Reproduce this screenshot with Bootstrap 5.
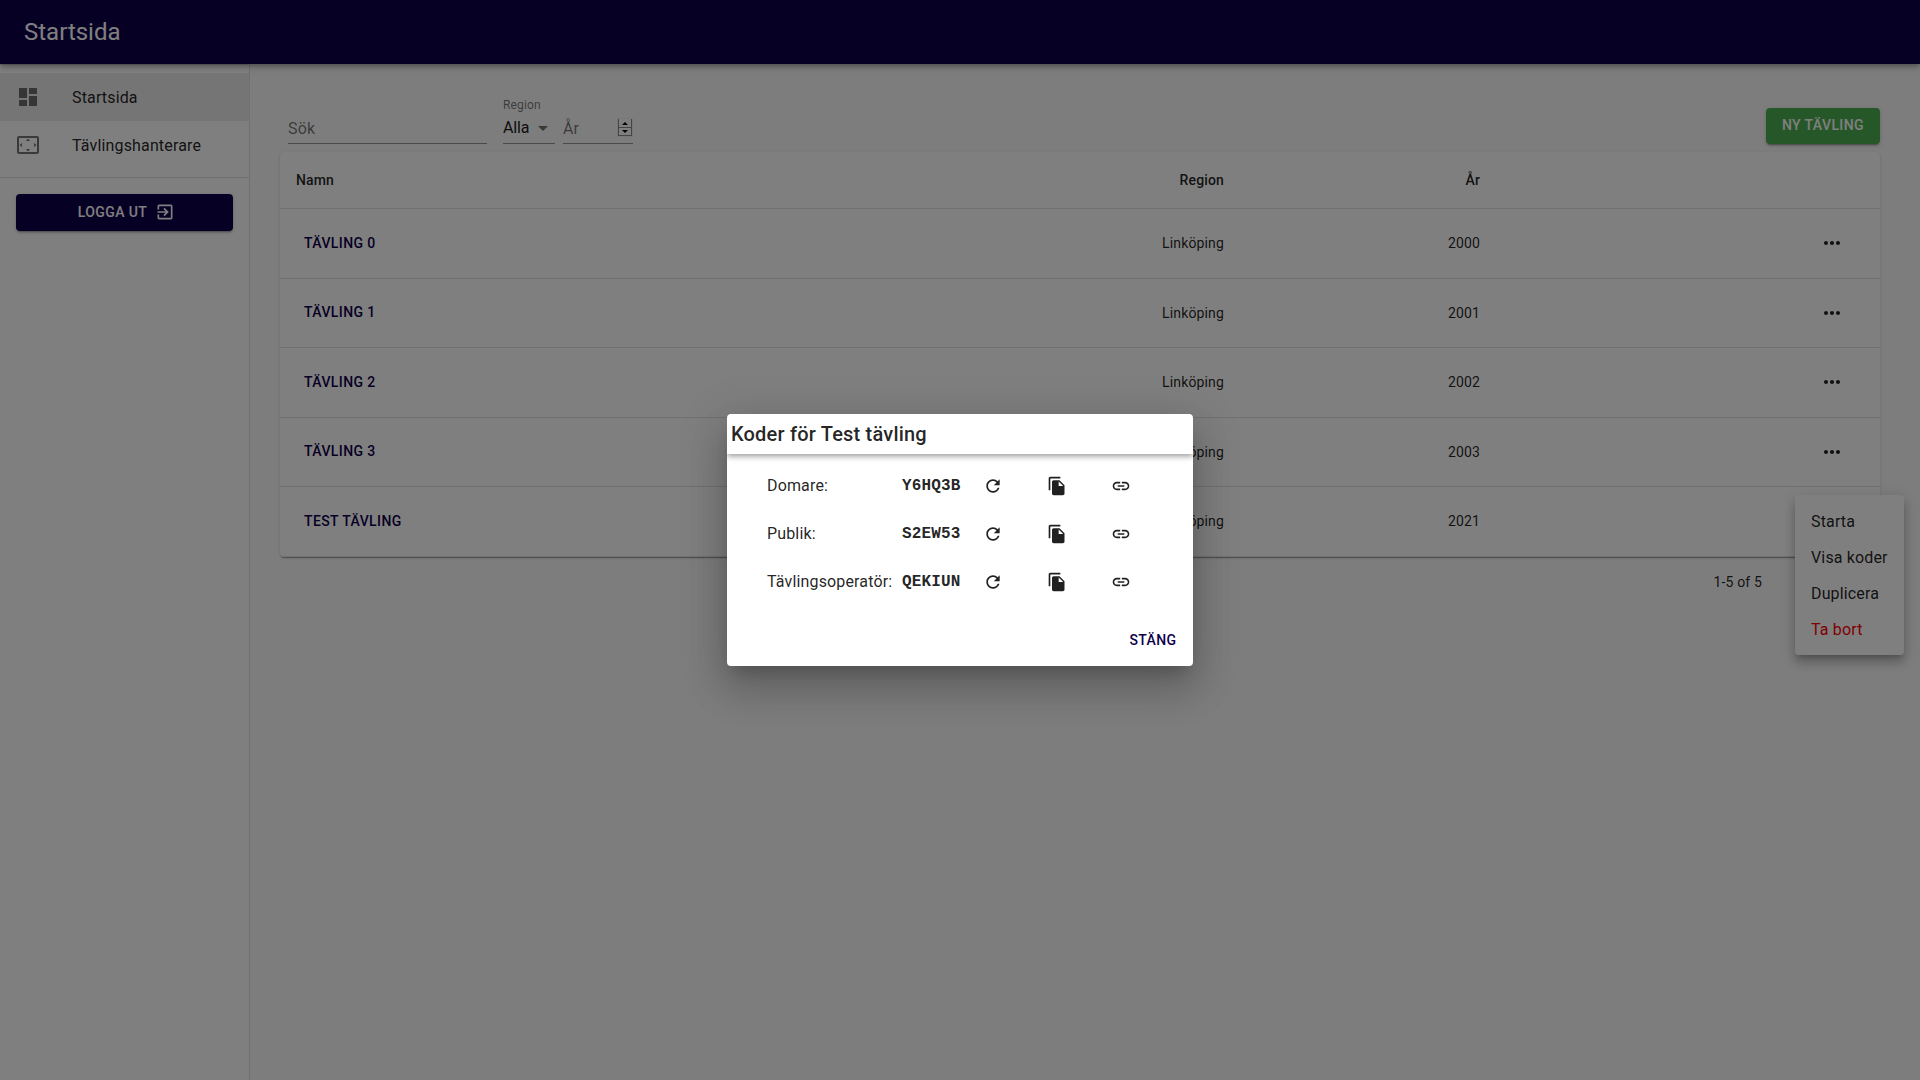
<!DOCTYPE html>
<html lang="sv">
<head>
<meta charset="utf-8">
<title>Startsida</title>
<meta name="viewport" content="width=device-width, initial-scale=1">
<link href="https://cdn.jsdelivr.net/npm/bootstrap@5.3.0/dist/css/bootstrap.min.css" rel="stylesheet">
<style>
:root{--brand:#0e004a;--ink:rgba(0,0,0,.87);--muted:rgba(0,0,0,.54);--line:rgba(0,0,0,.12)}
body{font-family:Roboto,"Liberation Sans",sans-serif;font-size:16px;line-height:1.5;letter-spacing:.00938em;color:var(--ink);background:#fafafa;height:1080px;overflow:hidden}
svg{fill:currentColor;display:block;flex:none}
.ic20{width:20px;height:20px}.ic24{width:24px;height:24px}
.topbar{height:64px;background:var(--brand);color:#fff;font-size:24px;letter-spacing:0;padding:0 24px;z-index:5;box-shadow:0 2px 4px -1px rgba(0,0,0,.2),0 4px 5px rgba(0,0,0,.14),0 1px 10px rgba(0,0,0,.12)}
.side{width:250px;background:#fff;border-right:1px solid #e0e0e0}
.side-list{padding:8px 0;border-top:1px solid #e0e0e0;border-bottom:1px solid #e0e0e0}
.side-link{height:48px;padding:0 16px;color:var(--ink);text-decoration:none;gap:32px}
.side-link svg{color:var(--muted)}
.side-link span{padding-top:1px}
.side-link.on{background:#ebebeb}
.tbtn{font-family:inherit;font-size:14px;font-weight:500;line-height:24.5px;letter-spacing:.02857em;text-transform:uppercase;padding:6px 8px;min-width:64px;border:0;border-radius:4px;color:var(--brand);background:none}
.tbtn.filled{color:#fff;background:var(--brand);padding:6px 16px;box-shadow:0 3px 1px -2px rgba(0,0,0,.2),0 2px 2px rgba(0,0,0,.14),0 1px 5px rgba(0,0,0,.12)}
.tbtn.logout{padding:6px 14px 6px 18px}
.tbtn.green{background:#4caf50;line-height:24px;padding-top:5.4px;padding-bottom:7.1px}
.work{padding:0 40px 0 30px}
.filters{height:88px;padding:0 0 8px 8px}
.field{border-bottom:1px solid #949494;height:32px;padding:7px 0 6px;line-height:19px;color:var(--ink);letter-spacing:.00938em}
.field.sel{padding-top:6px;letter-spacing:-.01em;color:#1c1c1c}
.ph{color:rgba(0,0,0,.54)}
.f-label{font-size:12px;line-height:12px;color:var(--muted);margin-bottom:1px}
.paper{background:#fff;border-radius:4px;box-shadow:0 2px 1px -1px rgba(0,0,0,.2),0 1px 1px rgba(0,0,0,.14),0 1px 3px rgba(0,0,0,.12)}
.comp{width:100%;table-layout:fixed;border-collapse:separate;border-spacing:0;font-size:14px;line-height:20px;letter-spacing:.01071em}
.comp th,.comp td{padding:16px;border-bottom:1px solid #e0e0e0;vertical-align:middle}
.comp th{font-weight:500;line-height:24px}
.comp td{height:69.5px}
.comp td:not(:last-child){padding-top:15.8px;padding-bottom:16.2px}
.spin{width:14px;height:17px;margin:0 1px 0 0;background:#fff;border:1px solid #8a8a8a;border-top:0;outline:1px solid #efefef}
.spin span{height:50%}
.spin span+span{border-top:1px solid #8a8a8a}
.spin svg{fill:#000}
.pop{position:absolute;left:1795px;top:495px;width:109px;padding:8px 0;border-radius:4px;background:#fff;z-index:10;box-shadow:0 5px 5px -3px rgba(0,0,0,.2),0 8px 10px 1px rgba(0,0,0,.14),0 3px 14px 2px rgba(0,0,0,.12)}
.pop div{height:36px;padding:7px 16px 5px}
.pop .del{color:red}
.veil{position:absolute;inset:0;background:rgba(0,0,0,.5);z-index:20}
.dlg{width:466px;height:252px;background:#fff;border-radius:4px;box-shadow:0 11px 15px -7px rgba(0,0,0,.2),0 24px 38px 3px rgba(0,0,0,.14),0 9px 46px 8px rgba(0,0,0,.12)}
.dlg-head{height:40px;padding:4px;font-size:20px;line-height:32px;font-weight:500;letter-spacing:.01em;border-radius:4px 4px 0 0;box-shadow:0 2px 4px -1px rgba(0,0,0,.2),0 4px 5px rgba(0,0,0,.14),0 1px 10px rgba(0,0,0,.12);clip-path:inset(0 0 -16px 0)}
.codes{padding:8px 40px 0 40px}
.code-row{height:48px}
.code-name{width:135px}
.code-val{width:59px;font-family:"Courier New","Liberation Mono",monospace;font-weight:700;letter-spacing:.00938em}
.ibtn{width:64px}
</style>
<script src="https://cdn.jsdelivr.net/npm/bootstrap@5.3.0/dist/js/bootstrap.bundle.min.js"></script>
</head>
<body class="d-flex flex-column position-relative">
<svg width="0" height="0" class="position-absolute">
<symbol id="dots" viewBox="0 0 24 24"><path d="M6 10c-1.1 0-2 .9-2 2s.9 2 2 2 2-.9 2-2-.9-2-2-2zm12 0c-1.1 0-2 .9-2 2s.9 2 2 2 2-.9 2-2-.9-2-2-2zm-6 0c-1.1 0-2 .9-2 2s.9 2 2 2 2-.9 2-2-.9-2-2-2z"/></symbol>
<symbol id="refresh" viewBox="0 0 24 24"><path d="M17.65 6.35C16.2 4.9 14.21 4 12 4c-4.42 0-7.99 3.58-7.99 8s3.57 8 7.99 8c3.73 0 6.84-2.55 7.73-6h-2.08c-.82 2.33-3.04 4-5.65 4-3.31 0-6-2.69-6-6s2.69-6 6-6c1.66 0 3.14.69 4.22 1.78L13 11h7V4l-2.35 2.35z"/></symbol>
<symbol id="copy" viewBox="0 0 24 24"><path d="M16 1H4c-1.1 0-2 .9-2 2v14h2V3h12V1zm-1 4l6 6v10c0 1.1-.9 2-2 2H7.99C6.89 23 6 22.1 6 21l.01-14c0-1.1.89-2 1.99-2h7zm-1 7h5.5L14 6.5V12z"/></symbol>
<symbol id="link" viewBox="0 0 24 24"><path d="M3.9 12c0-1.71 1.39-3.1 3.1-3.1h4V7H7c-2.76 0-5 2.24-5 5s2.24 5 5 5h4v-1.9H7c-1.71 0-3.1-1.39-3.1-3.1zM8 13h8v-2H8v2zm9-6h-4v1.9h4c1.71 0 3.1 1.39 3.1 3.1s-1.39 3.1-3.1 3.1h-4V17h4c2.76 0 5-2.24 5-5s-2.24-5-5-5z"/></symbol>
</svg>
<header class="topbar d-flex align-items-center flex-shrink-0">Startsida</header>
<div class="d-flex flex-grow-1">
<nav class="side flex-shrink-0">
<div class="side-list">
<a class="side-link on d-flex align-items-center"><svg class="ic24" viewBox="0 0 24 24"><path d="M3 13h8V3H3v10zm0 8h8v-6H3v6zm10 0h8V11h-8v10zm0-18v6h8V3h-8z"/></svg><span>Startsida</span></a>
<a class="side-link d-flex align-items-center"><svg class="ic24" viewBox="0 0 24 24"><path d="M12.01 5.5L10 8h4l-1.99-2.5zM18 10v4l2.5-1.99L18 10zM6 10l-2.5 2.01L6 14v-4zm8 6h-4l2.01 2.5L14 16zm7-13H3c-1.1 0-2 .9-2 2v14c0 1.1.9 2 2 2h18c1.1 0 2-.9 2-2V5c0-1.1-.9-2-2-2zm0 16.01H3V4.99h18v14.02z"/></svg><span>Tävlingshanterare</span></a>
</div>
<div class="p-3"><button class="tbtn filled logout w-100 d-flex align-items-center justify-content-center">Logga ut<svg class="ic20 ms-2" viewBox="0 0 24 24"><path d="M10.09 15.59L11.5 17l5-5-5-5-1.41 1.41L12.67 11H3v2h9.67l-2.58 2.59zM19 3H5c-1.11 0-2 .9-2 2v4h2V5h14v14H5v-4H3v4c0 1.1.89 2 2 2h14c1.1 0 2-.9 2-2V5c0-1.1-.9-2-2-2z"/></svg></button></div>
</nav>
<main class="work flex-grow-1">
<div class="filters d-flex align-items-end">
<div class="field ph" style="width:199px">Sök</div>
<div class="ms-3" style="width:52px"><div class="f-label">Region</div><div class="field sel d-flex justify-content-between">Alla<svg class="ic24 ph" style="margin:-2px 0" viewBox="0 0 24 24"><path d="M7 10l5 5 5-5z"/></svg></div></div>
<div class="field ph ms-2 d-flex justify-content-between" style="width:70px">År<div class="spin d-flex flex-column"><span class="d-flex align-items-center justify-content-center"><svg width="6" height="3" viewBox="0 0 6 3"><path d="M0 3l3-3 3 3z"/></svg></span><span class="d-flex align-items-center justify-content-center"><svg width="6" height="3" viewBox="0 0 6 3"><path d="M0 0l3 3 3-3z"/></svg></span></div></div>
<button class="tbtn filled green ms-auto">Ny tävling</button>
</div>
<div class="paper">
<table class="comp">
<colgroup><col><col style="width:300px"><col style="width:256px"><col style="width:384px"></colgroup>
<thead><tr><th>Namn</th><th class="text-end">Region</th><th class="text-end">År</th><th></th></tr></thead>
<tbody>
<tr><td><button class="tbtn">Tävling 0</button></td><td class="text-end">Linköping</td><td class="text-end">2000</td><td><div class="ibtn ms-auto d-flex justify-content-center"><svg class="ic24"><use href="#dots"/></svg></div></td></tr>
<tr><td><button class="tbtn">Tävling 1</button></td><td class="text-end">Linköping</td><td class="text-end">2001</td><td><div class="ibtn ms-auto d-flex justify-content-center"><svg class="ic24"><use href="#dots"/></svg></div></td></tr>
<tr><td><button class="tbtn">Tävling 2</button></td><td class="text-end">Linköping</td><td class="text-end">2002</td><td><div class="ibtn ms-auto d-flex justify-content-center"><svg class="ic24"><use href="#dots"/></svg></div></td></tr>
<tr><td><button class="tbtn">Tävling 3</button></td><td class="text-end">Linköping</td><td class="text-end">2003</td><td><div class="ibtn ms-auto d-flex justify-content-center"><svg class="ic24"><use href="#dots"/></svg></div></td></tr>
<tr><td><button class="tbtn">Test tävling</button></td><td class="text-end">Linköping</td><td class="text-end">2021</td><td><div class="ibtn ms-auto d-flex justify-content-center"><svg class="ic24"><use href="#dots"/></svg></div></td></tr>
</tbody>
</table>
</div>
<div class="d-flex justify-content-end align-items-center" style="height:52px;padding-right:118px;font-size:14px;letter-spacing:.01071em">1-5 of 5</div>
</main>
</div>
<div class="pop"><div>Starta</div><div>Visa koder</div><div>Duplicera</div><div class="del">Ta bort</div></div>
<div class="veil d-flex align-items-center justify-content-center">
<div class="dlg d-flex flex-column">
<div class="dlg-head">Koder för Test tävling</div>
<div class="codes">
<div class="code-row d-flex align-items-center"><span class="code-name">Domare:</span><span class="code-val">Y6HQ3B</span><span class="ibtn d-flex justify-content-center"><svg class="ic20"><use href="#refresh"/></svg></span><span class="ibtn d-flex justify-content-center"><svg class="ic20"><use href="#copy"/></svg></span><span class="ibtn d-flex justify-content-center"><svg class="ic20"><use href="#link"/></svg></span></div>
<div class="code-row d-flex align-items-center"><span class="code-name">Publik:</span><span class="code-val">S2EW53</span><span class="ibtn d-flex justify-content-center"><svg class="ic20"><use href="#refresh"/></svg></span><span class="ibtn d-flex justify-content-center"><svg class="ic20"><use href="#copy"/></svg></span><span class="ibtn d-flex justify-content-center"><svg class="ic20"><use href="#link"/></svg></span></div>
<div class="code-row d-flex align-items-center"><span class="code-name">Tävlingsoperatör:</span><span class="code-val">QEKIUN</span><span class="ibtn d-flex justify-content-center"><svg class="ic20"><use href="#refresh"/></svg></span><span class="ibtn d-flex justify-content-center"><svg class="ic20"><use href="#copy"/></svg></span><span class="ibtn d-flex justify-content-center"><svg class="ic20"><use href="#link"/></svg></span></div>
</div>
<div class="d-flex justify-content-end mt-auto p-2"><button class="tbtn">Stäng</button></div>
</div>
</div>
</body>
</html>
